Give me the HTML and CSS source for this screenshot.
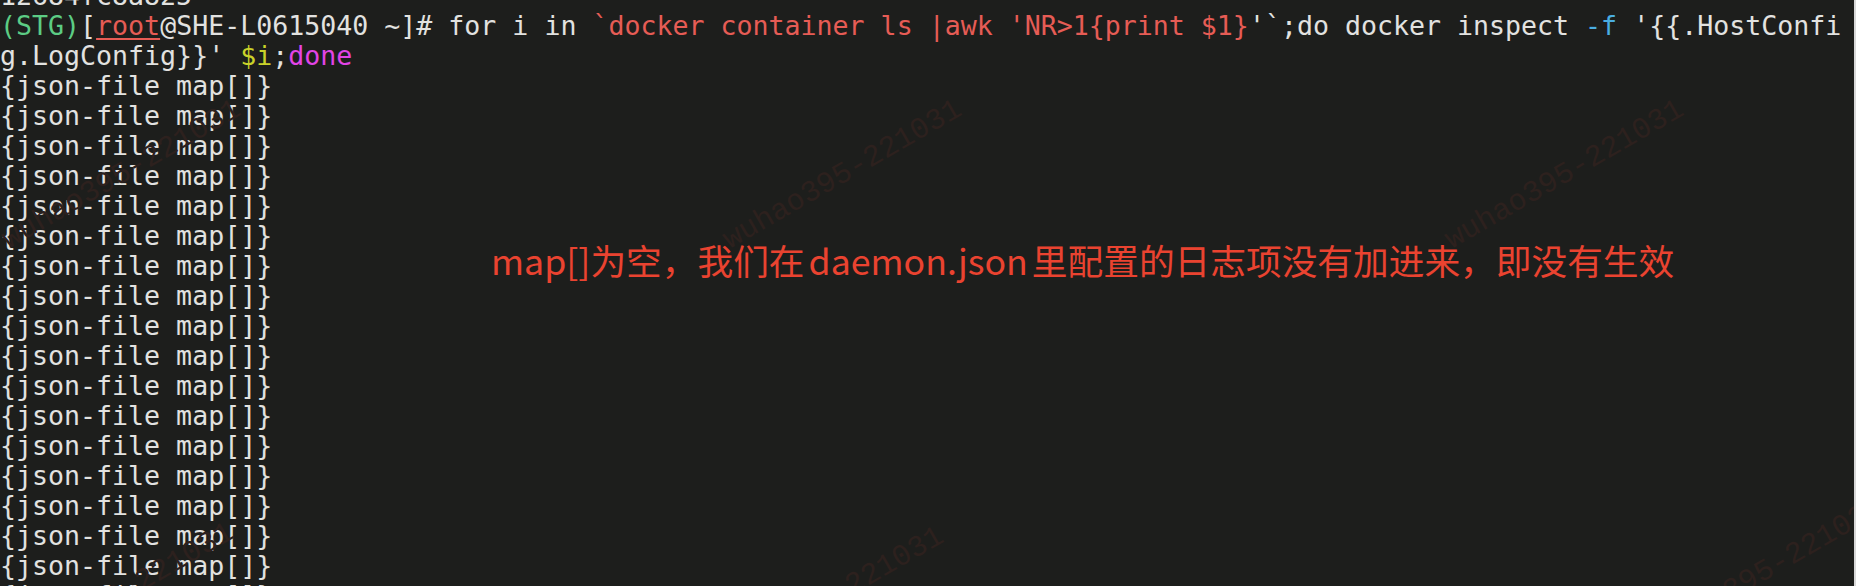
FILE: index.html
```html
<!DOCTYPE html>
<html>
<head>
<meta charset="utf-8">
<link rel="stylesheet" href="styles.css">
</head>
<body>
<div class="term">
<pre class="out">12684fc8a825
<span class="g">(STG)</span>[<span class="r u">root</span>@SHE-L0615040 ~]# for i in <span class="r">`docker container ls |awk 'NR&gt;1{print $1}</span>'`;do docker inspect <span class="b">-f</span> '{{.HostConfi
g.LogConfig}}' <span class="y">$i</span>;<span class="m">done</span>
{json-file map[]}
{json-file map[]}
{json-file map[]}
{json-file map[]}
{json-file map[]}
{json-file map[]}
{json-file map[]}
{json-file map[]}
{json-file map[]}
{json-file map[]}
{json-file map[]}
{json-file map[]}
{json-file map[]}
{json-file map[]}
{json-file map[]}
{json-file map[]}
{json-file map[]}
{json-file map[]}</pre>
<div class="note">map[]为空，我们在<span class="sp">daemon.json</span>里配置的日志项没有加进来，即没有生效</div>
<div class="wm wm1">wuhao395-221031</div>
<div class="wm wm2">wuhao395-221031</div>
<div class="wm wm3">wuhao395-221031</div>
<div class="wm wm4">wuhao395-221031</div>
<div class="wm wm5">wuhao395-221031</div>
<div class="wm wm6">wuhao395-221031</div>
</div>
</body>
</html>
```
FILE: styles.css
```css
html, body {
  margin: 0;
  padding: 0;
  background: #1d1e1c;
  overflow: hidden;
}
.term {
  position: relative;
  width: 1854px;
  height: 586px;
  overflow: hidden;
  background: #1d1e1c;
  border-right: 2px solid #d8d8d8;
}
.out {
  margin: -19px 0 0 0;
  padding: 0;
  font-family: "DejaVu Sans Mono", monospace;
  font-size: 26.6px;
  line-height: 30px;
  color: #e2e2e0;
  white-space: pre;
}
.g { color: #5ccc84; }
.r { color: #e65c55; }
.u { text-decoration: underline; text-decoration-thickness: 2px; text-underline-offset: 3px; }
.b { color: #4aaee2; }
.y { color: #c9d22a; }
.m { color: #e244e6; }
.note {
  position: absolute;
  left: 491px;
  top: 239px;
  font-family: "Noto Sans CJK SC", "Noto Sans", sans-serif;
  font-size: 35.7px;
  line-height: 42px;
  color: #ea4330;
  white-space: nowrap;
}
.sp { margin: 0 4px; }
.wm {
  position: absolute;
  font-family: "Liberation Mono", monospace;
  font-size: 30px;
  line-height: 30px;
  color: #2d211e;
  white-space: nowrap;
  transform-origin: 0 100%;
  transform: rotate(-30deg);
}
.wm1 { left: 12px; top: 225px; }
.wm2 { left: 733px; top: 225px; }
.wm3 { left: 1455px; top: 225px; }
.wm4 { left: 5px; top: 648px; }
.wm5 { left: 715px; top: 652px; }
.wm6 { left: 1655px; top: 622px; }
```
